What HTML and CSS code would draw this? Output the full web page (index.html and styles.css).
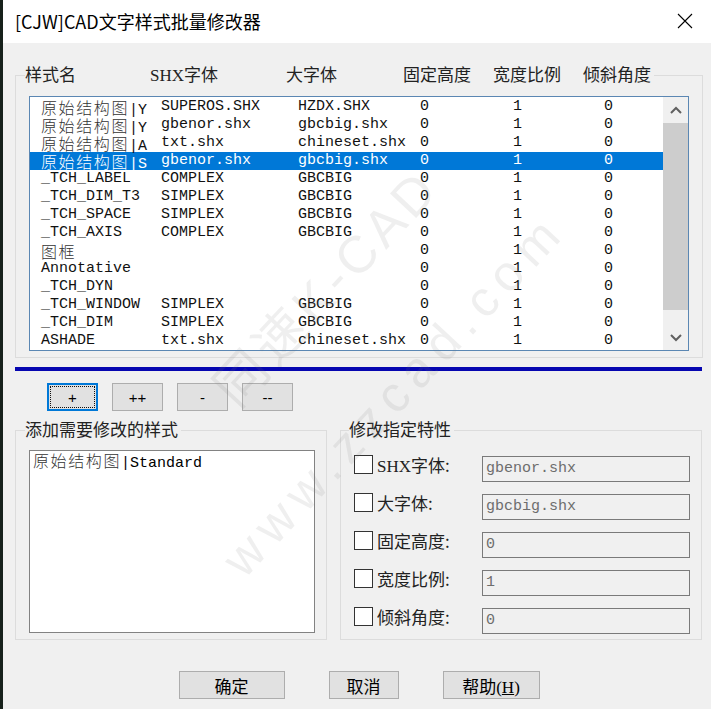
FILE: index.html
```html
<!DOCTYPE html>
<html lang="zh-CN">
<head>
    <meta charset="UTF-8">
    <title>[CJW]CAD文字样式批量修改器</title>
    <link rel="stylesheet" href="styles.css">
</head>
<body>
    <div class="window">
        <div class="titlebar">
            <span class="title">[CJW]CAD文字样式批量修改器</span>
            <svg class="close" width="16" height="16" viewBox="0 0 16 16">
                <path d="M1 1 L15 15 M15 1 L1 15" stroke="#000" stroke-width="1.1" fill="none"/>
            </svg>
        </div>

        <div class="dialog-body">
            <!-- style list -->
            <div class="group styles-group">
                <div class="legend headers">
                    <span class="h-name">样式名</span>
                    <span class="h-shx">SHX字体</span>
                    <span class="h-big">大字体</span>
                    <span class="h-num">固定高度</span>
                    <span class="h-num">宽度比例</span>
                    <span class="h-last">倾斜角度</span>
                </div>
                <div class="listbox">
                    <div class="rows">
                        <div class="row"><span class="c-name"><span class="cjk">原始结构图</span>|Y</span><span class="c-shx">SUPEROS.SHX</span><span class="c-big">HZDX.SHX</span><span class="c-h">0</span><span class="c-w">1</span><span class="c-o">0</span></div>
                        <div class="row"><span class="c-name"><span class="cjk">原始结构图</span>|Y</span><span class="c-shx">gbenor.shx</span><span class="c-big">gbcbig.shx</span><span class="c-h">0</span><span class="c-w">1</span><span class="c-o">0</span></div>
                        <div class="row"><span class="c-name"><span class="cjk">原始结构图</span>|A</span><span class="c-shx">txt.shx</span><span class="c-big">chineset.shx</span><span class="c-h">0</span><span class="c-w">1</span><span class="c-o">0</span></div>
                        <div class="row selected"><span class="c-name"><span class="cjk">原始结构图</span>|S</span><span class="c-shx">gbenor.shx</span><span class="c-big">gbcbig.shx</span><span class="c-h">0</span><span class="c-w">1</span><span class="c-o">0</span></div>
                        <div class="row"><span class="c-name">_TCH_LABEL</span><span class="c-shx">COMPLEX</span><span class="c-big">GBCBIG</span><span class="c-h">0</span><span class="c-w">1</span><span class="c-o">0</span></div>
                        <div class="row"><span class="c-name">_TCH_DIM_T3</span><span class="c-shx">SIMPLEX</span><span class="c-big">GBCBIG</span><span class="c-h">0</span><span class="c-w">1</span><span class="c-o">0</span></div>
                        <div class="row"><span class="c-name">_TCH_SPACE</span><span class="c-shx">SIMPLEX</span><span class="c-big">GBCBIG</span><span class="c-h">0</span><span class="c-w">1</span><span class="c-o">0</span></div>
                        <div class="row"><span class="c-name">_TCH_AXIS</span><span class="c-shx">COMPLEX</span><span class="c-big">GBCBIG</span><span class="c-h">0</span><span class="c-w">1</span><span class="c-o">0</span></div>
                        <div class="row"><span class="c-name"><span class="cjk">图框</span></span><span class="c-shx"></span><span class="c-big"></span><span class="c-h">0</span><span class="c-w">1</span><span class="c-o">0</span></div>
                        <div class="row"><span class="c-name">Annotative</span><span class="c-shx"></span><span class="c-big"></span><span class="c-h">0</span><span class="c-w">1</span><span class="c-o">0</span></div>
                        <div class="row"><span class="c-name">_TCH_DYN</span><span class="c-shx"></span><span class="c-big"></span><span class="c-h">0</span><span class="c-w">1</span><span class="c-o">0</span></div>
                        <div class="row"><span class="c-name">_TCH_WINDOW</span><span class="c-shx">SIMPLEX</span><span class="c-big">GBCBIG</span><span class="c-h">0</span><span class="c-w">1</span><span class="c-o">0</span></div>
                        <div class="row"><span class="c-name">_TCH_DIM</span><span class="c-shx">SIMPLEX</span><span class="c-big">GBCBIG</span><span class="c-h">0</span><span class="c-w">1</span><span class="c-o">0</span></div>
                        <div class="row"><span class="c-name">ASHADE</span><span class="c-shx">txt.shx</span><span class="c-big">chineset.shx</span><span class="c-h">0</span><span class="c-w">1</span><span class="c-o">0</span></div>
                    </div>
                    <div class="scrollbar">
                        <div class="sb-btn">
                            <svg width="12" height="8" viewBox="0 0 12 8"><path d="M1 7 L6 2 L11 7" stroke="#606060" stroke-width="2" fill="none"/></svg>
                        </div>
                        <div class="sb-track"><div class="sb-thumb"></div></div>
                        <div class="sb-btn">
                            <svg width="12" height="8" viewBox="0 0 12 8"><path d="M1 1 L6 6 L11 1" stroke="#606060" stroke-width="2" fill="none"/></svg>
                        </div>
                    </div>
                </div>
            </div>

            <div class="divider"></div>

            <div class="tool-buttons">
                <button class="btn small focused">+</button>
                <button class="btn small">++</button>
                <button class="btn small">-</button>
                <button class="btn small">--</button>
            </div>

            <div class="lower">
                <div class="group add-group">
                    <div class="legend">添加需要修改的样式</div>
                    <div class="picked">
                        <div class="picked-item"><span class="cjk">原始结构图</span>|Standard</div>
                    </div>
                </div>

                <div class="group prop-group">
                    <div class="legend">修改指定特性</div>
                    <div class="prop-row">
                        <span class="check"></span>
                        <span class="prop-label"><span class="latin">SHX</span>字体:</span>
                        <div class="field">gbenor.shx</div>
                    </div>
                    <div class="prop-row">
                        <span class="check"></span>
                        <span class="prop-label">大字体:</span>
                        <div class="field">gbcbig.shx</div>
                    </div>
                    <div class="prop-row">
                        <span class="check"></span>
                        <span class="prop-label">固定高度:</span>
                        <div class="field">0</div>
                    </div>
                    <div class="prop-row">
                        <span class="check"></span>
                        <span class="prop-label">宽度比例:</span>
                        <div class="field">1</div>
                    </div>
                    <div class="prop-row">
                        <span class="check"></span>
                        <span class="prop-label">倾斜角度:</span>
                        <div class="field">0</div>
                    </div>
                </div>
            </div>

            <div class="actions">
                <button class="btn ok">确定</button>
                <button class="btn cancel">取消</button>
                <button class="btn help">帮助(<u>H</u>)</button>
            </div>
        </div>

        <!-- site watermark over the dialog -->
        <div class="watermark wm-top">同速K-CAD</div>
        <div class="watermark wm-url">www.zzcad.com</div>
    </div>
</body>
</html>
```

FILE: styles.css
```css
body {
    margin: 0;
    background: #17211b;
    font-family: "Noto Sans CJK SC", sans-serif;
}
.window {
    position: relative;
    margin-left: 3px;
    height: 709px;
    background: #f0f0f0;
    overflow: hidden;
}
.titlebar {
    height: 43px;
    background: #fff;
    display: flex;
    align-items: center;
    justify-content: space-between;
    padding: 0 18px 0 12px;
}
.title {
    font-size: 18px;
    color: #000;
    margin-top: -2px;
}
.close {
    margin-top: -1px;
}

.dialog-body {
    padding: 32px 8px 0 12px;
}
.group {
    border: 1px solid #dcdcdc;
}
.legend {
    margin-top: -11px;
    height: 20px;
    line-height: 22px;
    font-size: 17px;
    color: #222;
    background: #f0f0f0;
    width: fit-content;
    padding-right: 3px;
    font-family: "Liberation Serif", "Noto Sans CJK SC", serif;
}

/* top list */
.styles-group {
    padding: 0 13px 6px 13px;
}
.headers {
    display: flex;
    margin-left: -4px;
}
.h-name { width: 125px; }
.h-shx { width: 136px; }
.h-big { width: 117px; }
.h-num { width: 90px; }
.listbox {
    margin-top: 11px;
    height: 253px;
    border: 1px solid #5b87b3;
    background: #fff;
    display: flex;
}
.rows {
    flex: 1;
    padding-top: 1px;
    font-family: "Liberation Mono", "Noto Sans CJK SC", monospace;
    font-size: 15px;
    line-height: 18px;
    color: #111;
}
.row {
    display: flex;
    height: 18px;
    padding-left: 11px;
    white-space: nowrap;
}
.row.selected {
    background: #0078d7;
    color: #fff;
}
.cjk {
    line-height: 18px;
    font-family: "Noto Sans CJK SC", sans-serif;
    font-size: 16px;
    letter-spacing: 1.6px;
    font-weight: 300;
    color: #333;
}
.row.selected .cjk {
    color: #fff;
}
.c-name { width: 120px; }
.c-shx { width: 137px; }
.c-big { width: 122px; }
.c-h { width: 93px; }
.c-w { width: 91px; }

.scrollbar {
    width: 25px;
    background: #f0f0f0;
    display: flex;
    flex-direction: column;
}
.sb-btn {
    height: 25px;
    display: flex;
    align-items: center;
    justify-content: center;
}
.sb-track {
    flex: 1;
    padding-top: 1px;
}
.sb-thumb {
    height: 187px;
    background: #cdcdcd;
}

.divider {
    margin-top: 9px;
    margin-right: 1px;
    height: 4px;
    background: #0606b0;
}

.btn {
    background: #e1e1e1;
    border: 1px solid #adadad;
    height: 28px;
    padding: 0;
    color: #000;
    font-family: "Liberation Serif", "Noto Sans CJK SC", serif;
    font-size: 17px;
}
.tool-buttons {
    margin-top: 12px;
    padding-left: 32px;
    display: flex;
    gap: 14px;
}
.btn.small {
    width: 51px;
    font-family: "Liberation Sans", sans-serif;
    font-size: 15px;
}
.btn.focused {
    border: 2px solid #0078d7;
    outline: 1px dotted #111;
    outline-offset: -4px;
}

.lower {
    margin-top: 19px;
    display: flex;
    gap: 13px;
}
.add-group {
    width: 286px;
    padding: 0 11px 6px 13px;
}
.add-group .legend {
    margin-left: -4px;
}
.picked {
    margin-top: 10px;
    height: 181px;
    border: 1px solid #828282;
    background: #fff;
    padding-left: 3px;
    font-family: "Liberation Mono", "Noto Sans CJK SC", monospace;
    font-size: 15px;
    line-height: 18px;
}

.prop-group {
    width: 336px;
    padding: 0 11px 4px 13px;
}
.prop-group .legend {
    margin-left: -5px;
}
.prop-row {
    display: flex;
    align-items: flex-start;
    margin-top: 12px;
}
.prop-group .legend + .prop-row {
    margin-top: 16px;
}
.check {
    width: 17px;
    height: 17px;
    margin-top: -1px;
    border: 1px solid #333;
    background: #fff;
}
.prop-label {
    width: 105px;
    margin-left: 4px;
    font-size: 17px;
    line-height: 17px;
    color: #222;
    font-family: "Noto Sans CJK SC", sans-serif;
}
.prop-label .latin {
    font-family: "Liberation Serif", serif;
}
.field {
    width: 203px;
    height: 24px;
    line-height: 24px;
    border: 1px solid #7a7a7a;
    background: #f0f0f0;
    padding-left: 3px;
    color: #6d6d6d;
    font-family: "Liberation Mono", monospace;
    font-size: 15px;
}

.actions {
    margin-top: 31px;
    display: flex;
    justify-content: center;
    gap: 44px;
}
.btn.ok { width: 106px; }
.btn.cancel { width: 70px; }
.btn.help { width: 97px; }

.watermark {
    position: absolute;
    color: rgba(120, 120, 120, 0.12);
    font-family: "Liberation Sans", "Noto Sans CJK SC", sans-serif;
    white-space: nowrap;
    transform: rotate(-47deg);
    transform-origin: left bottom;
    pointer-events: none;
}
.wm-top {
    left: 245px;
    top: 345px;
    font-size: 52px;
    letter-spacing: 5px;
}
.wm-url {
    left: 250px;
    top: 530px;
    font-size: 50px;
    letter-spacing: 9px;
}
```
